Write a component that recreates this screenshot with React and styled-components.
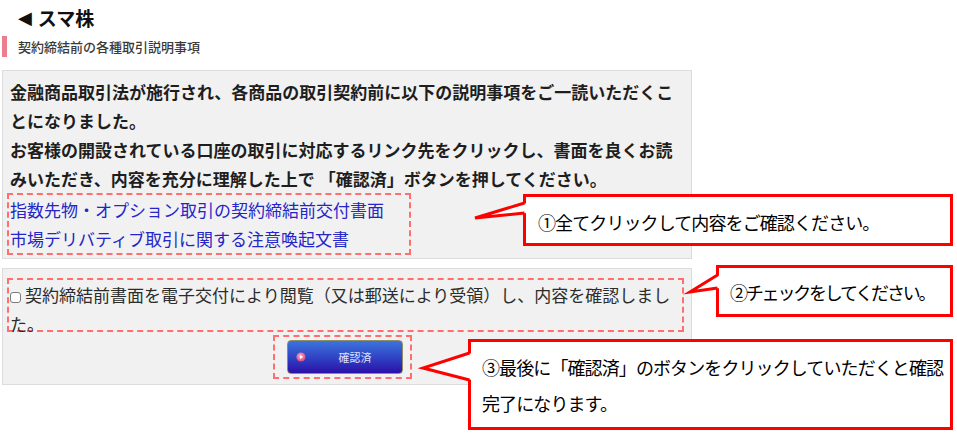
import React from "react";
import styled, { createGlobalStyle } from "styled-components";

const Global = createGlobalStyle`
  html, body { margin: 0; padding: 0; background: #fff; }
  body { font-family: "Noto Sans CJK JP", "Noto Sans", sans-serif; color: #222; }
`;

const Root = styled.div`
  position: relative;
  width: 957px;
  height: 438px;
  overflow: hidden;
`;

const Page = styled.div`
  width: 690px;
  padding-left: 2px;
`;

const Title = styled.h1`
  margin: 0;
  padding: 7px 0 0 16px;
  height: 22px;
  display: flex;
  align-items: center;
  gap: 6px;
  font-size: 19px;
  line-height: 22px;
  font-weight: 700;
  color: #111;
`;

const BackArrow = styled.span`
  font-family: "DejaVu Sans", sans-serif;
  font-size: 18px;
  line-height: 22px;
`;

const SubHead = styled.div`
  margin-top: 7px;
  display: flex;
  align-items: center;
  height: 21px;
`;

const PinkBar = styled.span`
  width: 5px;
  height: 21px;
  background: #ec7d8c;
`;

const SubText = styled.span`
  margin-left: 11px;
  font-size: 13px;
  color: #3a3a3a;
  font-weight: 500;
`;

const Panel = styled.section`
  box-sizing: border-box;
  width: 690px;
  margin-top: ${(p) => p.$gap}px;
  border: 1px solid #dcdcdc;
  background: #f1f1f1;
  padding: ${(p) => p.$pad};
`;

const Lead = styled.p`
  margin: 0;
  font-size: 17px;
  line-height: 29px;
  font-weight: 700;
  color: #1e1e1e;
`;

const DashedBox = styled.div`
  box-sizing: border-box;
  border: 2px dashed #ff6f6f;
  margin-left: -3px;
  width: ${(p) => p.$w}px;
  height: ${(p) => (p.$h ? `${p.$h}px` : "auto")};
  padding-left: 1px;
`;

const DocLink = styled.a`
  display: block;
  font-size: 17px;
  line-height: 29px;
  color: #2525c8;
  text-decoration: none;
`;

const Agree = styled.label`
  display: block;
  font-size: 17px;
  line-height: 29px;
  color: #2c2c2c;
`;

const Check = styled.input`
  appearance: none;
  width: 11px;
  height: 11px;
  margin: 0 4px 0 0;
  border: 1px solid #7a7a7a;
  border-radius: 3px;
  background: #fff;
  vertical-align: -1px;
  box-sizing: border-box;
`;

const ButtonFrame = styled.div`
  box-sizing: border-box;
  width: 139px;
  margin: 3px 0 0 263px;
  border: 2px dashed #ff6f6f;
  padding: 3px 7px 3px 12px;
`;

const ConfirmButton = styled.button`
  box-sizing: border-box;
  width: 116px;
  height: 34px;
  display: flex;
  align-items: center;
  padding: 0 0 0 8px;
  border: 1px solid #8f8f66;
  border-radius: 4px;
  background: linear-gradient(to bottom, #3b74dc 0%, #3145c6 50%, #2b10a6 100%);
  color: #dfe0ff;
  font-family: "Noto Sans CJK JP", sans-serif;
  font-size: 11px;
  cursor: pointer;
`;

const ButtonLabel = styled.span`
  flex: 1;
  text-align: center;
  padding-left: 2px;
`;

const Callout = styled.div`
  position: absolute;
  left: ${(p) => p.$x}px;
  top: ${(p) => p.$y}px;
  width: ${(p) => p.$w}px;
  height: ${(p) => p.$h}px;
  box-sizing: border-box;
  border: 3px solid #ff0000;
  background: #fff;
  padding: ${(p) => p.$pad};
  font-family: "Noto Sans CJK JP", sans-serif;
  font-size: 18px;
  line-height: ${(p) => p.$lh || 24}px;
  letter-spacing: ${(p) => p.$ls || -0.9}px;
  color: #000;
  white-space: nowrap;
  display: flex;
  align-items: ${(p) => (p.$top ? "flex-start" : "center")};
`;

const PointerSvg = styled.svg`
  position: absolute;
  left: ${(p) => -3 - p.$p}px;
  top: -3px;
  width: ${(p) => p.$p + 6}px;
  height: ${(p) => p.$h}px;
  overflow: visible;
`;

function Pointer({ reach, h, tx, ty, b1, b2 }) {
  return (
    <PointerSvg $p={reach} $h={h} viewBox={`${-reach} 0 ${reach + 6} ${h}`}>
      <polygon points={`4,${b1} ${tx},${ty} 4,${b2}`} fill="#fff" />
      <polyline
        points={`1.5,${b1} ${tx},${ty} 1.5,${b2}`}
        fill="none"
        stroke="#ff0000"
        strokeWidth="3"
        strokeLinejoin="miter"
        strokeMiterlimit="10"
      />
    </PointerSvg>
  );
}

function PlayDot() {
  return (
    <svg width="10" height="10" viewBox="0 0 10 10">
      <defs>
        <radialGradient id="pd" cx="0.45" cy="0.4" r="0.6">
          <stop offset="0" stopColor="#fbb2cc" />
          <stop offset="1" stopColor="#d9467f" />
        </radialGradient>
      </defs>
      <circle cx="5" cy="5" r="4.6" fill="url(#pd)" />
      <polygon points="4,3 7,5 4,7" fill="#fff" />
    </svg>
  );
}

export default function App() {
  return (
    <Root>
      <Global />
      <Page>
        <Title>
          <BackArrow>◀</BackArrow>
          <span>スマ株</span>
        </Title>
        <SubHead>
          <PinkBar />
          <SubText>契約締結前の各種取引説明事項</SubText>
        </SubHead>

        <Panel $gap={13} $pad="6px 7px 3px 7px">
          <Lead>
            金融商品取引法が施行され、各商品の取引契約前に以下の説明事項をご一読いただくことになりました。
            <br />
            お客様の開設されている口座の取引に対応するリンク先をクリックし、書面を良くお読みいただき、内容を充分に理解した上で 「確認済」ボタンを押してください。
          </Lead>
          <DashedBox $w={404}>
            <DocLink href="#">指数先物・オプション取引の契約締結前交付書面</DocLink>
            <DocLink href="#">市場デリバティブ取引に関する注意喚起文書</DocLink>
          </DashedBox>
        </Panel>

        <Panel $gap={9} $pad="9px 7px 5px 7px">
          <DashedBox $w={677} $h={54}>
            <Agree>
              <Check type="checkbox" />
              契約締結前書面を電子交付により閲覧（又は郵送により受領）し、内容を確認しました。
            </Agree>
          </DashedBox>
          <ButtonFrame>
            <ConfirmButton type="button">
              <PlayDot />
              <ButtonLabel>確認済</ButtonLabel>
            </ConfirmButton>
          </ButtonFrame>
        </Panel>
      </Page>

      <Callout $x={523} $y={194} $w={430} $h={52} $pad="3px 0 0 12px">
        <Pointer reach={52} h={52} tx={-48} ty={24} b1={9} b2={19} />
        ①全てクリックして内容をご確認ください。
      </Callout>

      <Callout $x={716} $y={265} $w={237} $h={52} $pad="1px 0 0 11px" $ls={-2.2}>
        <Pointer reach={30} h={52} tx={-26} ty={27} b1={10} b2={23} />
        ②チェックをしてください。
      </Callout>

      <Callout $x={468} $y={339} $w={485} $h={91} $pad="7px 0 0 11px" $lh={36} $top>
        <Pointer reach={50} h={91} tx={-45} ty={29} b1={14} b2={41} />
        <div>
          ③最後に「確認済」のボタンをクリックしていただくと確認
          <br />
          完了になります。
        </div>
      </Callout>
    </Root>
  );
}
